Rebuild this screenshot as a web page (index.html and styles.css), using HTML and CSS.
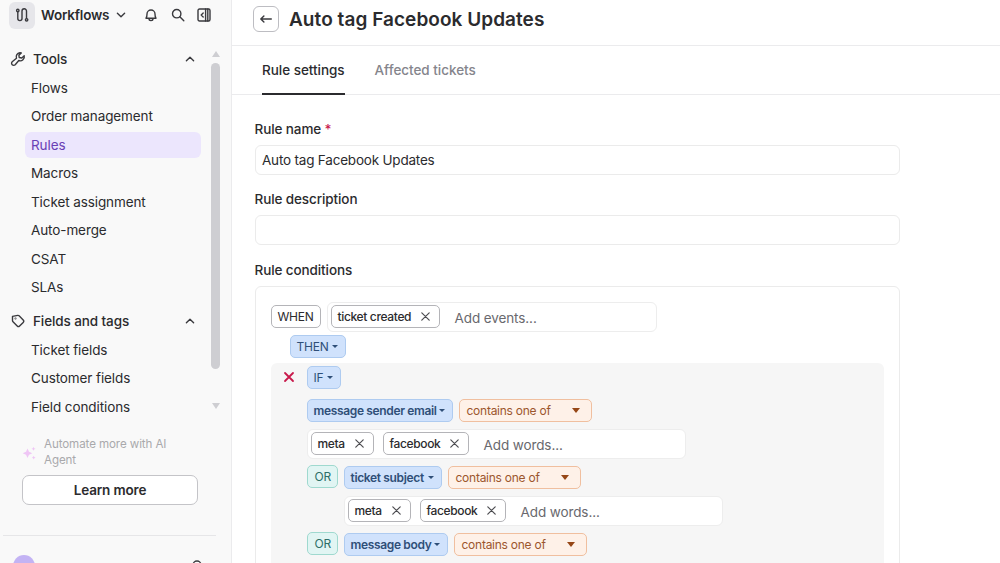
FILE: index.html
```html
<!DOCTYPE html>
<html lang="en">
<head>
  <meta charset="utf-8">
  <title>Auto tag Facebook Updates</title>
  <link rel="stylesheet" href="styles.css">
</head>
<body>

<div class="app">
  <aside class="sidebar">
    <div class="topbar">
      <span class="logo">
        <svg width="16" height="16" viewBox="0 0 16 16"><circle cx="3.800" cy="3.500" r="1.200"/><circle cx="12.600" cy="12.800" r="1.200"/><path d="M3.800 4.700V11.500a2 2 0 0 0 4.200 0V4a2.200 2.200 0 0 1 4.500 0v7.600"/></svg>
      </span>
      <b class="workspace">Workflows</b>
      <svg class="caret" width="10" height="10" viewBox="0 0 10 10"><path d="M1.400 3.200L5 6.800l3.600-3.600"/></svg>
      <svg class="bell" width="14" height="14" viewBox="0 0 14 14"><path d="M2 10.200c.8-1 1-2 1-4.200a4 4 0 0 1 8 0c0 2.200.2 3.200 1 4.200zM5 10.800c0 2.400 4 2.400 4 0"/></svg>
      <svg class="search" width="14" height="14" viewBox="0 0 14 14"><circle cx="5.700" cy="5.700" r="4.200"/><path d="M8.800 8.800l4 4"/></svg>
      <svg class="collapse" width="14" height="14" viewBox="0 0 14 14"><rect x="1" y="1" width="12" height="12" rx="1.500"/><path d="M8.600 1v12M10.800 1v12M6.200 5L4.200 7l2 2"/></svg>
    </div>

    <div class="nav-wrap">
      <nav class="nav">
        <div class="group">
          <svg width="16" height="16" viewBox="0 0 16 16"><path d="M9.800 1.800a4 4 0 0 0-3.300 5.400L2.200 10.800a2.100 2.100 0 1 0 3 3L8.800 9.500a4 4 0 0 0 5.400-4.700L11.800 7l-2.600-.5-.3-2.400 2.400-2.100a4 4 0 0 0-1.500-.2z"/></svg>
          <span>Tools</span>
          <svg class="up" width="10" height="10" viewBox="0 0 10 10"><path d="M1.400 6.800L5 3.200l3.600 3.600"/></svg>
        </div>
        <a>Flows</a>
        <a>Order management</a>
        <a class="active">Rules</a>
        <a>Macros</a>
        <a>Ticket assignment</a>
        <a>Auto-merge</a>
        <a>CSAT</a>
        <a>SLAs</a>
        <div class="group fields">
          <svg width="16" height="16" viewBox="0 0 16 16"><path d="M2.500 3.400l5.200-1c.6-.1 1 0 1.400.4l4.100 4.200c.8.800.8 1.600 0 2.400L9.600 13c-.8.800-1.600.8-2.400 0L3 8.800c-.4-.4-.5-.8-.5-1.400z"/><circle cx="5.500" cy="5.500" r=".3"/></svg>
          <span>Fields and tags</span>
          <svg class="up" width="10" height="10" viewBox="0 0 10 10"><path d="M1.400 6.800L5 3.200l3.600 3.600"/></svg>
        </div>
        <a>Ticket fields</a>
        <a>Customer fields</a>
        <a>Field conditions</a>
      </nav>
      <div class="scrollbar">
        <span class="arrow-up"></span>
        <span class="thumb"></span>
        <span class="arrow-down"></span>
      </div>
    </div>

    <div class="promo">
      <svg width="14" height="14" viewBox="0 0 14 14"><path d="M5.500 2.500l1.500 3.300 3.300 1.500L7 8.800l-1.500 3.300L4 8.800.7 7.300 4 5.800zM11.500.800l.6 1.400 1.400.6-1.400.6-.6 1.400-.6-1.400-1.400-.6 1.400-.6zM11.700 9.800l.6 1.300 1.300.6-1.300.6-.6 1.300-.6-1.300-1.300-.6 1.300-.6z"/></svg>
      <p>Automate more with AI Agent</p>
    </div>
    <button class="learn">Learn more</button>

    <div class="user">
      <span class="avatar"></span>
      <svg width="14" height="14" viewBox="0 0 14 14"><circle cx="7" cy="5" r="4"/></svg>
    </div>
  </aside>

  <main class="main">
    <header class="header">
      <button class="back">
        <svg width="14" height="12" viewBox="0 0 14 12"><path d="M12.300 6H2M4.900 2.900L1.800 6l3.100 3.100"/></svg>
      </button>
      <h1>Auto tag Facebook Updates</h1>
    </header>

    <div class="tabs">
      <span class="tab selected">Rule settings</span>
      <span class="tab">Affected tickets</span>
    </div>

    <div class="content">
      <label>Rule name <i>*</i></label>
      <div class="input">Auto tag Facebook Updates</div>
      <label>Rule description</label>
      <div class="input"></div>
      <label>Rule conditions</label>

      <div class="conditions">
        <div class="row when">
          <span class="tag keyword">WHEN</span>
          <div class="field events">
            <span class="tag chip">ticket created <svg width="9" height="9" viewBox="0 0 9 9"><path d="M.8.800l7.400 7.400M8.200.800L.8 8.200"/></svg></span>
            <span class="hint">Add events...</span>
          </div>
        </div>
        <div class="row then"><span class="tag blue thin">THEN</span></div>

        <div class="block">
          <div class="row if">
            <svg class="remove" width="12" height="12" viewBox="0 0 12 12"><path d="M2 2l8 8M10 2l-8 8"/></svg>
            <span class="tag blue thin if-tag">IF</span>
          </div>
          <div class="row sender">
            <span class="tag blue email">message sender email</span>
            <span class="tag orange">contains one of</span>
          </div>
          <div class="field words">
            <span class="tag chip meta">meta <svg width="9" height="9" viewBox="0 0 9 9"><path d="M.8.800l7.400 7.400M8.200.800L.8 8.200"/></svg></span>
            <span class="tag chip facebook">facebook <svg width="9" height="9" viewBox="0 0 9 9"><path d="M.8.800l7.400 7.400M8.200.800L.8 8.200"/></svg></span>
            <span class="hint">Add words...</span>
          </div>
          <div class="row">
            <span class="tag or">OR</span>
            <span class="tag blue subject">ticket subject</span>
            <span class="tag orange">contains one of</span>
          </div>
          <div class="field words nested">
            <span class="tag chip meta">meta <svg width="9" height="9" viewBox="0 0 9 9"><path d="M.8.800l7.400 7.400M8.200.800L.8 8.200"/></svg></span>
            <span class="tag chip facebook">facebook <svg width="9" height="9" viewBox="0 0 9 9"><path d="M.8.800l7.400 7.400M8.200.800L.8 8.200"/></svg></span>
            <span class="hint">Add words...</span>
          </div>
          <div class="row">
            <span class="tag or">OR</span>
            <span class="tag blue body">message body</span>
            <span class="tag orange">contains one of</span>
          </div>
        </div>
      </div>
    </div>
  </main>
</div>

</body>
</html>
```
FILE: styles.css
```css
* {
  box-sizing: border-box;
}
body {
  margin: 0;
  font-family: Inter, "Liberation Sans", sans-serif;
  font-size: 13.5px;
  letter-spacing: -0.1px;
  color: #2b2b2e;
  background: #fff;
}
svg {
  fill: none;
  stroke: #3a3a3e;
  stroke-width: 1.4;
  stroke-linecap: round;
  stroke-linejoin: round;
  flex: none;
}
.app {
  display: flex;
  height: 563px;
  overflow: hidden;
}

/* sidebar */
.sidebar {
  width: 232px;
  flex: none;
  background: #f9f9f9;
  border-right: 1px solid #ebebed;
}
.topbar {
  display: flex;
  align-items: center;
  height: 30px;
  padding-left: 9px;
}
.logo {
  display: flex;
  align-items: center;
  justify-content: center;
  width: 26px;
  height: 27px;
  border-radius: 6px;
  background: #e6e6ea;
}
.workspace {
  width: 69px;
  margin-left: 6px;
  font-weight: 600;
  letter-spacing: -0.2px;
  white-space: nowrap;
}
.caret {
  margin-left: 6px;
}
.bell {
  margin-left: 18px;
}
.search {
  margin-left: 13px;
}
.collapse {
  margin-left: 12px;
}
.nav-wrap {
  display: flex;
  height: 377px;
  margin-top: 15px;
}
.nav {
  width: 201px;
}
.nav a {
  display: flex;
  align-items: center;
  height: 26.5px;
  margin: 0 0 2px 25px;
  padding-left: 6px;
  border-radius: 6px;
}
.nav .active {
  background: #ece6fd;
  color: #6a3fb5;
}
.group {
  display: flex;
  align-items: center;
  height: 28px;
  padding-left: 10px;
  margin-bottom: 1.6px;
  font-weight: 500;
}
.group span {
  margin-left: 7px;
}
.group.fields {
  margin-top: 6.2px;
}
.group .up {
  margin-left: auto;
  margin-right: 6px;
}
.scrollbar {
  display: flex;
  flex-direction: column;
  align-items: center;
  width: 9px;
  margin-left: 10px;
  padding-top: 6px;
}
.arrow-up, .arrow-down {
  border: 4.5px solid transparent;
}
.arrow-up {
  border-top: 0;
  border-bottom: 6px solid #ceced2;
}
.arrow-down {
  margin-top: 34px;
  border-bottom: 0;
  border-top: 6px solid #ceced2;
}
.thumb {
  width: 9px;
  height: 306px;
  margin-top: 6px;
  border-radius: 5px;
  background: #ceced2;
}
.promo {
  display: flex;
  align-items: center;
  margin: 15px 0 0 22px;
  color: #a9a9ac;
  font-size: 11.6px;
  line-height: 15.5px;
}
.promo svg {
  fill: #efc6f5;
  stroke: none;
}
.promo p {
  width: 135px;
  margin: 0 0 0 8px;
}
.learn {
  display: block;
  width: 176px;
  height: 30px;
  margin: 7px 0 0 22px;
  border: 1px solid #c4c4c8;
  border-radius: 7px;
  background: #fff;
  font: 600 13.5px Inter, sans-serif;
  letter-spacing: -0.15px;
  color: #2b2b2e;
}
.user {
  display: flex;
  justify-content: space-between;
  margin: 30px 15px 0 3px;
  padding: 19px 12px 0 10px;
  border-top: 1px solid #e6e6e8;
}
.avatar {
  width: 22px;
  height: 22px;
  border-radius: 50%;
  background: #c3b3f4;
}
.user svg {
  margin-top: 5px;
}

/* rule page */
.main {
  flex: 1;
  min-width: 0;
}
.header {
  display: flex;
  align-items: center;
  height: 46px;
  padding: 0 0 7px 21px;
  border-bottom: 1px solid #ebebed;
}
.back {
  display: flex;
  align-items: center;
  justify-content: center;
  width: 26px;
  height: 26px;
  padding: 0;
  border: 1px solid #bdbdc2;
  border-radius: 6px;
  background: #fff;
}
h1 {
  margin: 1px 0 0 10px;
  font-size: 19px;
  font-weight: 600;
  letter-spacing: 0.05px;
  line-height: 23px;
}
.tabs {
  display: flex;
  gap: 30px;
  height: 49px;
  padding-left: 30px;
  border-bottom: 1px solid #ebebed;
  font-weight: 500;
}
.tab {
  height: 49px;
  line-height: 49px;
  letter-spacing: -0.03px;
  color: #85858c;
}
.tab.selected {
  color: #2b2b2e;
  border-bottom: 2px solid #2b2b2e;
}
.content {
  width: 645.5px;
  margin: 25px 0 0 22.5px;
}
label {
  display: block;
  height: 25px;
  line-height: 18px;
  font-weight: 500;
}
label i {
  color: #c8194b;
  font-style: normal;
}
.input {
  height: 30px;
  margin-bottom: 15.3px;
  padding-left: 6.5px;
  border: 1px solid #ebebeb;
  border-radius: 6px;
  line-height: 28px;
  letter-spacing: -0.2px;
}
.conditions {
  height: 320px;
  padding: 15px 15px 0;
  border: 1px solid #ebebeb;
  border-radius: 6px;
}
.row {
  display: flex;
  align-items: center;
  gap: 6px;
  height: 23px;
}
.row.when {
  height: 30px;
}
.row.then {
  padding-left: 19px;
  margin-top: 3px;
}
.block {
  height: 220px;
  margin-top: 5px;
  padding: 3px 0 0 36px;
  border-radius: 6px;
  background: #f6f6f6;
}
.row.if {
  margin-left: -24px;
  gap: 12px;
}
.row.sender {
  margin-top: 10px;
}
.remove {
  stroke: #c8194b;
  stroke-width: 1.8;
}
.tag {
  display: flex;
  align-items: center;
  height: 23px;
  padding: 0 7px;
  border: 1px solid #b4b4b8;
  border-radius: 5px;
  background: #fff;
  font-size: 12px;
  letter-spacing: -0.25px;
  white-space: nowrap;
}
.keyword {
  width: 50px;
  padding: 0 6px;
  letter-spacing: -0.2px;
}
.chip {
  justify-content: space-between;
  width: 109px;
  padding: 0 9px 0 6px;
  font-weight: 500;
  letter-spacing: -0.35px;
}
.chip svg {
  stroke: #4d4d51;
  stroke-width: 1.2;
}
.chip.meta {
  width: 63px;
}
.chip.facebook {
  width: 86px;
  margin-left: 9px;
}
.blue {
  justify-content: space-between;
  padding: 0 7px 0 6px;
  border-color: #aecbf0;
  background: #d0e2fc;
  color: #2f4f78;
  font-weight: 600;
  letter-spacing: -0.35px;
}
.blue.thin {
  width: 56px;
  font-weight: 400;
  letter-spacing: -0.2px;
}
.blue.if-tag {
  width: 34px;
}
.blue::after, .orange::after {
  content: "";
  border: 3px solid transparent;
  border-top-color: currentColor;
  border-bottom: 0;
}
.email {
  width: 146px;
}
.subject {
  width: 98px;
}
.body {
  width: 104px;
}
.orange {
  justify-content: space-between;
  width: 133px;
  padding-right: 11px;
  border-color: #f0bf9f;
  background: #fef1e8;
  color: #9c562d;
}
.orange::after {
  border-width: 5px 4.5px 0;
  color: #964716;
}
.or {
  width: 31px;
  margin-bottom: 2px;
  border-color: #9fd9cf;
  background: #e1f5f3;
  color: #2f6f68;
}
.field {
  display: flex;
  align-items: center;
  height: 30px;
  padding-left: 3px;
  border: 1px solid #ededed;
  border-radius: 6px;
  background: #fff;
}
.field.events {
  width: 330px;
}
.field.words {
  width: 379px;
  margin: 7px 0;
}
.field.nested {
  margin-left: 37px;
}
.hint {
  margin: 2px 0 0 15px;
  color: #69696e;
}
```
